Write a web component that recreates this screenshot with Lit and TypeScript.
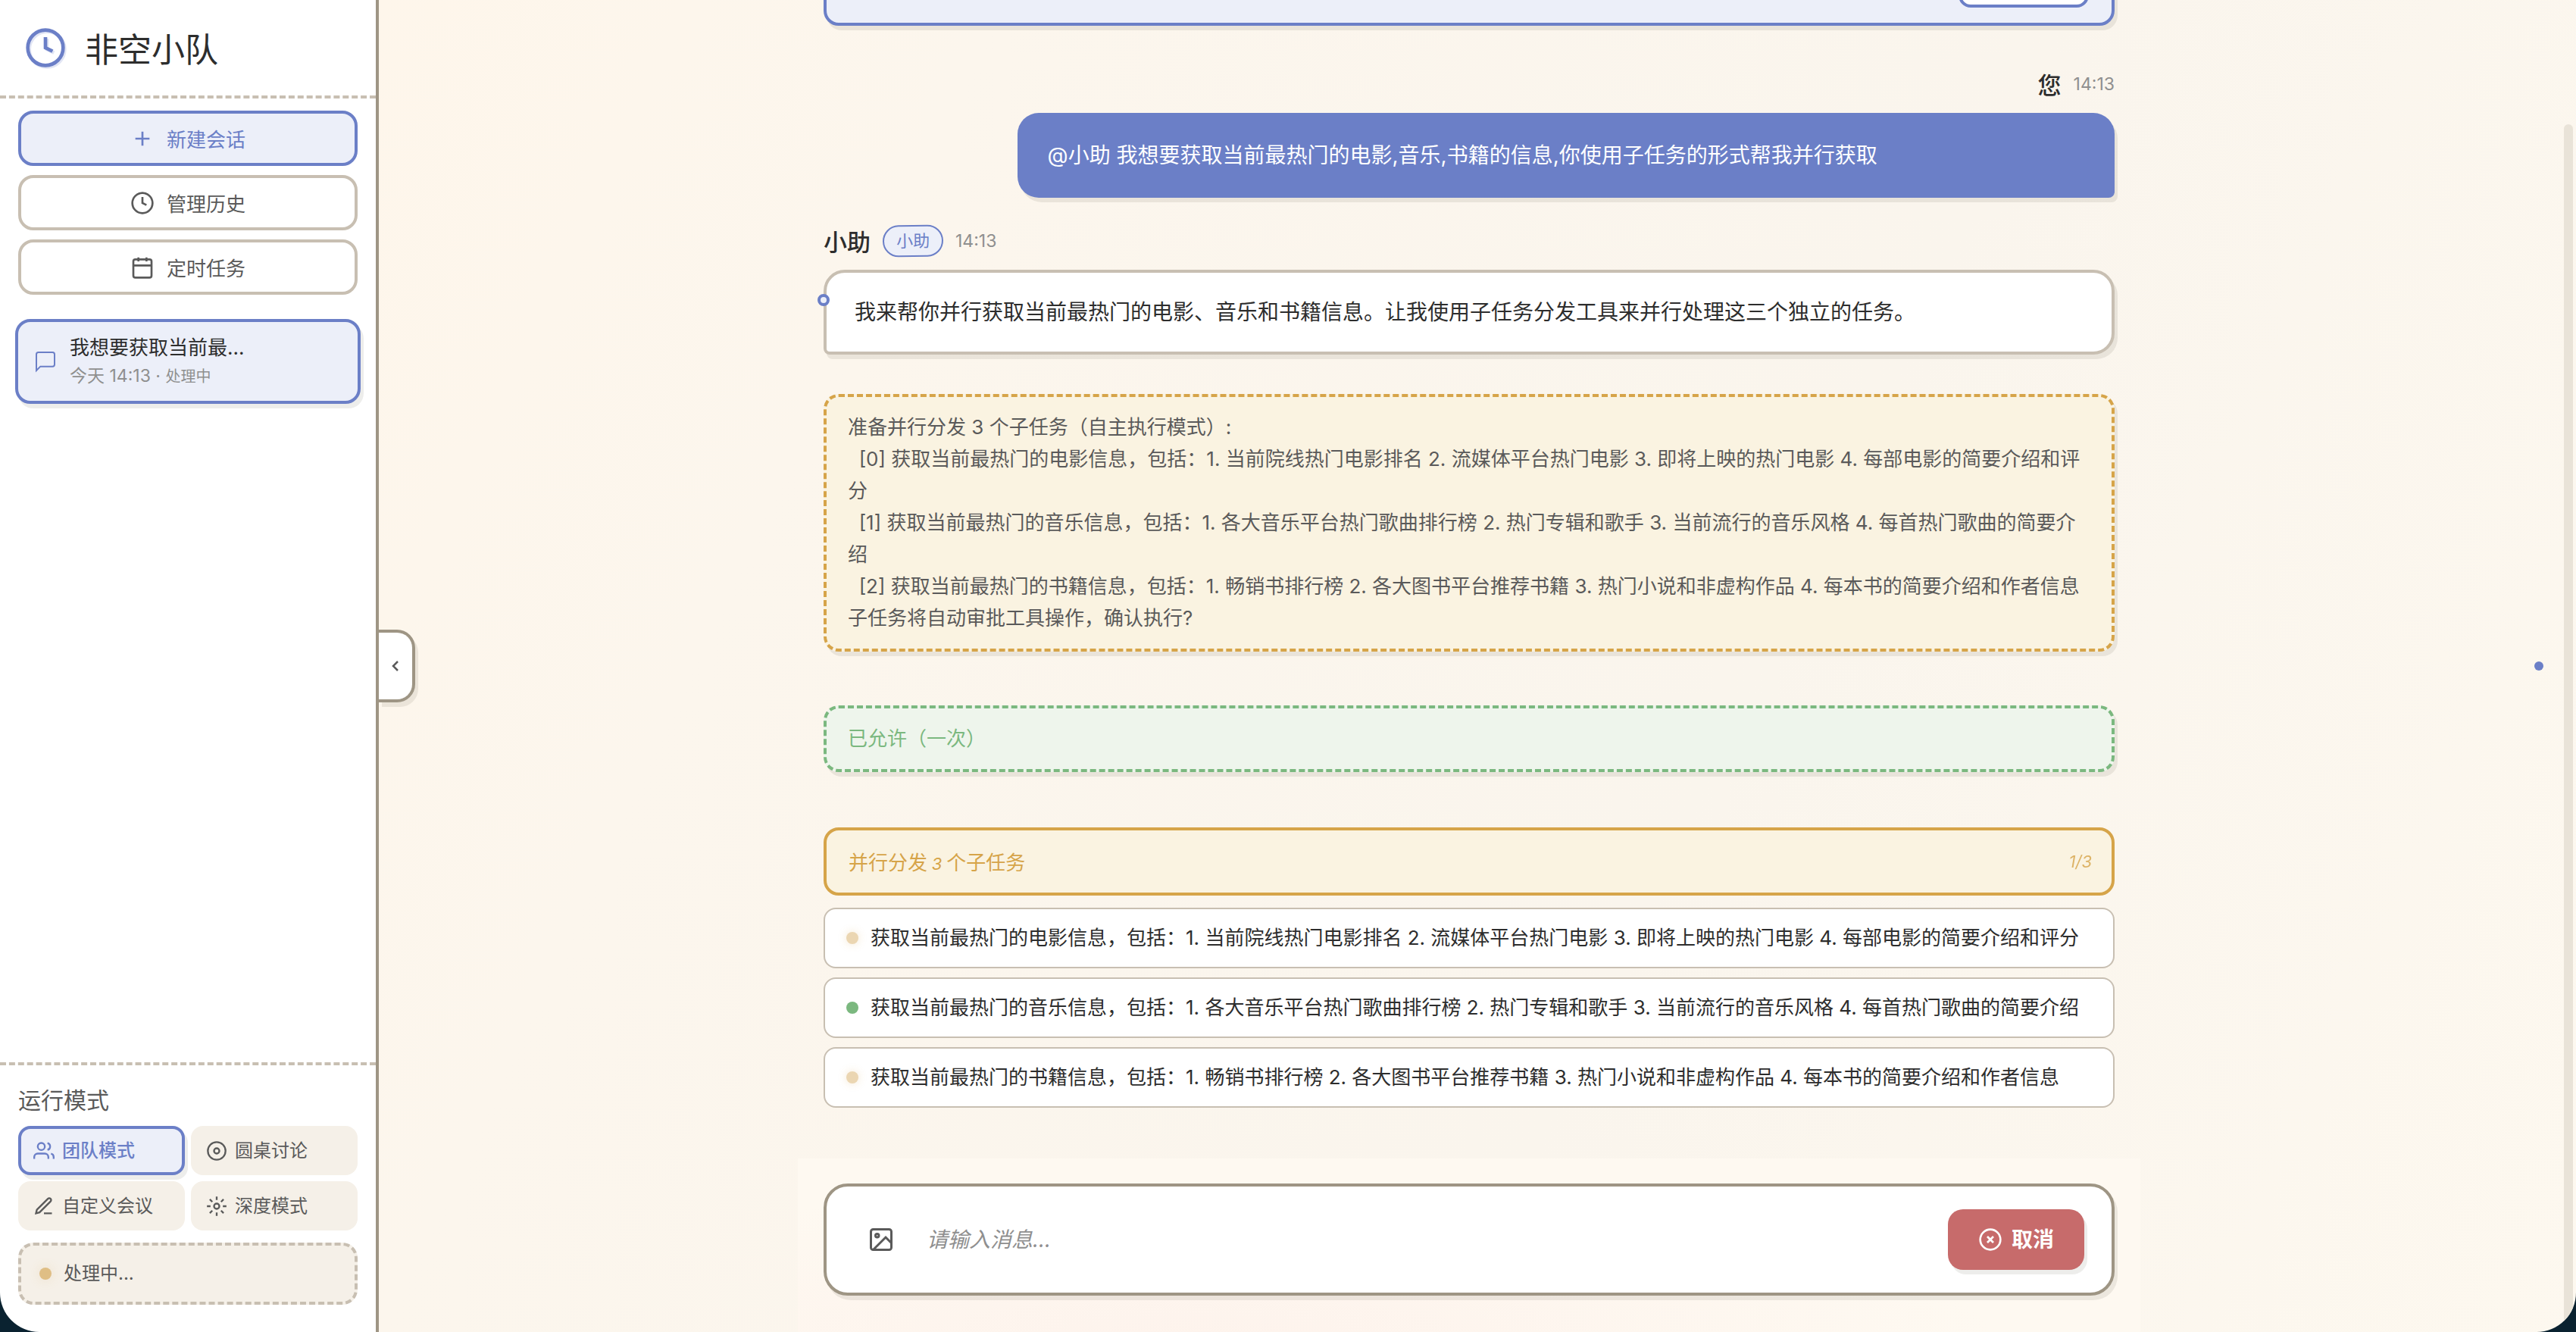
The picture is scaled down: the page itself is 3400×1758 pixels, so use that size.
import { LitElement, html, css, svg } from "lit";
import { customElement, property, state } from "lit/decorators.js";
import { classMap } from "lit/directives/class-map.js";

const ICONS = {
  clock: svg`<circle cx="12" cy="12" r="10"/><path d="M12 6v6l4 2"/>`,
  plus: svg`<path d="M12 5v14M5 12h14"/>`,
  calendar: svg`<rect x="3" y="4" width="18" height="18" rx="2"/><path d="M16 2v4M8 2v4M3 10h18"/>`,
  message: svg`<path d="M21 15a2 2 0 0 1-2 2H7l-4 4V5a2 2 0 0 1 2-2h14a2 2 0 0 1 2 2z"/>`,
  users: svg`<path d="M17 21v-2a4 4 0 0 0-4-4H5a4 4 0 0 0-4 4v2"/><circle cx="9" cy="7" r="4"/><path d="M23 21v-2a4 4 0 0 0-3-3.87M16 3.13a4 4 0 0 1 0 7.75"/>`,
  target: svg`<circle cx="12" cy="12" r="10"/><circle cx="12" cy="12" r="3"/>`,
  pen: svg`<path d="M12 20h9M16.5 3.5a2.121 2.121 0 0 1 3 3L7 19l-4 1 1-4L16.5 3.5z"/>`,
  spark: svg`<circle cx="12" cy="12" r="3"/><path d="M12 1v4M12 19v4M4.22 4.22l2.83 2.83M16.95 16.95l2.83 2.83M1 12h4M19 12h4M4.22 19.78l2.83-2.83M16.95 7.05l2.83-2.83"/>`,
  chevron: svg`<path d="M15 18l-6-6 6-6"/>`,
  image: svg`<rect x="3" y="3" width="18" height="18" rx="2"/><circle cx="8.5" cy="8.5" r="1.5"/><path d="M21 15l-5-5L5 21"/>`,
  cancel: svg`<circle cx="12" cy="12" r="10"/><path d="M15 9l-6 6M9 9l6 6"/>`,
};

type IconName = keyof typeof ICONS;

@customElement("line-icon")
export class LineIcon extends LitElement {
  static styles = css`
    :host {
      display: inline-flex;
      flex: none;
      width: 32px;
      height: 32px;
    }
    .glyph {
      width: 100%;
      height: 100%;
      fill: none;
      stroke: currentColor;
    }
  `;

  @property() name: IconName = "clock";
  @property({ type: Number }) weight = 2;

  render() {
    return html`<svg class="glyph" viewBox="0 0 24 24" stroke-width=${this.weight} aria-hidden="true">
      ${ICONS[this.name]}
    </svg>`;
  }
}

const palette = css`
  :host {
    --blue: #6b7fc7;
    --blue-soft: #eceff9;
    --amber: #d6a449;
    --amber-soft: #faf3e1;
    --green: #7bb87f;
    --green-soft: #eef5ec;
    --red: #c76b6b;
    --line: #c8bfb2;
    --line-strong: #9e9584;
    --sand: #f5f0e8;
    --ink: #2d2d2d;
    --ink-mid: #5a5a5a;
    --ink-soft: #8f8f8f;
    --lift: 4px 6px 0 rgba(60, 50, 30, 0.09);
    --sans: Inter, "Noto Sans CJK SC", sans-serif;
    --hand: "Kaiti SC", KaiTi, STKaiti, "Noto Sans CJK SC", sans-serif;
  }
  * {
    box-sizing: border-box;
  }
  button {
    margin: 0;
    font: inherit;
    color: inherit;
    cursor: pointer;
  }
`;

@customElement("side-panel")
export class SidePanel extends LitElement {
  static styles = [
    palette,
    css`
      :host {
        display: flex;
        flex-direction: column;
        width: 500px;
        flex: none;
        box-sizing: border-box;
        background: #fff;
        border-right: 4px solid var(--line-strong);
        font-family: var(--sans);
        color: var(--ink-mid);
      }
      .brand {
        display: flex;
        align-items: center;
        gap: 24px;
        padding: 35px 32px;
        border-bottom: 4px dashed var(--line);
      }
      .logo {
        width: 56px;
        height: 56px;
        color: var(--blue);
        filter: drop-shadow(2px 2px 0 rgba(107, 127, 199, 0.2));
      }
      .name {
        margin: 0;
        font: 400 44px/56px var(--hand);
        color: var(--ink);
      }
      .actions {
        display: flex;
        flex-direction: column;
        gap: 12px;
        padding: 16px 24px 32px;
      }
      .action {
        display: flex;
        align-items: center;
        justify-content: center;
        gap: 16px;
        padding: 16px;
        background: #fff;
        border: 4px solid var(--line);
        border-radius: 20px;
        font: 400 26px/33px var(--hand);
      }
      .action.primary {
        background: var(--blue-soft);
        border-color: var(--blue);
        color: var(--blue);
      }
      .sessions {
        display: flex;
        flex-direction: column;
        padding: 0 20px;
      }
      .session {
        display: flex;
        align-items: center;
        gap: 16px;
        padding: 15px 20px;
        text-align: left;
        background: var(--blue-soft);
        border: 4px solid var(--blue);
        border-radius: 20px;
        box-shadow: var(--lift);
      }
      .session-icon {
        color: var(--blue);
      }
      .session-text {
        display: flex;
        flex-direction: column;
      }
      .session-title {
        font-size: 26px;
        line-height: 38px;
        color: var(--ink);
      }
      .session-meta {
        font-size: 23px;
        line-height: 36px;
        color: var(--ink-soft);
      }
      .session-state {
        font-size: 20px;
        line-height: 20px;
      }
      .modes {
        margin-top: auto;
        padding: 24px 24px 36px;
        border-top: 4px dashed var(--line);
      }
      .modes-title {
        margin: 0 0 16px;
        font: 400 30px/40px var(--hand);
      }
      .mode-grid {
        display: grid;
        grid-template-columns: 1fr 1fr;
        gap: 8px;
      }
      .mode {
        display: flex;
        align-items: center;
        gap: 10px;
        padding: 12px 16px;
        background: var(--sand);
        border: 4px solid transparent;
        border-radius: 16px;
        font-size: 24px;
        line-height: 33px;
      }
      .mode.on {
        background: var(--blue-soft);
        border-color: var(--blue);
        box-shadow: var(--lift);
        color: var(--blue);
        font-weight: 500;
      }
      .mode-icon {
        width: 28px;
        height: 28px;
      }
      .status {
        display: flex;
        align-items: center;
        gap: 16px;
        margin-top: 16px;
        padding: 20px 24px;
        background: var(--sand);
        border: 4px dashed var(--line);
        border-radius: 20px;
        font-size: 24px;
        line-height: 34px;
      }
      .pulse {
        width: 16px;
        height: 16px;
        border-radius: 50%;
        background: #dfbe85;
        box-shadow: 0 0 16px rgba(214, 164, 73, 0.2);
      }
    `,
  ];

  @state() private mode = "团队模式";

  private readonly actions: { icon: IconName; label: string; primary?: boolean }[] = [
    { icon: "plus", label: "新建会话", primary: true },
    { icon: "clock", label: "管理历史" },
    { icon: "calendar", label: "定时任务" },
  ];

  private readonly modes: { icon: IconName; label: string }[] = [
    { icon: "users", label: "团队模式" },
    { icon: "target", label: "圆桌讨论" },
    { icon: "pen", label: "自定义会议" },
    { icon: "spark", label: "深度模式" },
  ];

  render() {
    return html`
      <header class="brand">
        <line-icon class="logo" name="clock"></line-icon>
        <h1 class="name">非空小队</h1>
      </header>
      <nav class="actions">
        ${this.actions.map(
          (a) => html`<button class=${classMap({ action: true, primary: !!a.primary })}>
            <line-icon name=${a.icon}></line-icon>${a.label}
          </button>`,
        )}
      </nav>
      <div class="sessions">
        <button class="session">
          <line-icon class="session-icon" name="message" weight="1.5"></line-icon>
          <span class="session-text">
            <span class="session-title">我想要获取当前最...</span>
            <span class="session-meta">今天 14:13 · <span class="session-state">处理中</span></span>
          </span>
        </button>
      </div>
      <section class="modes">
        <h2 class="modes-title">运行模式</h2>
        <div class="mode-grid">
          ${this.modes.map(
            (m) => html`<button
              class=${classMap({ mode: true, on: m.label === this.mode })}
              aria-pressed=${m.label === this.mode ? "true" : "false"}
              @click=${() => (this.mode = m.label)}
            >
              <line-icon class="mode-icon" name=${m.icon}></line-icon>${m.label}
            </button>`,
          )}
        </div>
        <div class="status" role="status"><span class="pulse"></span>处理中...</div>
      </section>
    `;
  }
}

const MOVIE = "获取当前最热门的电影信息，包括：1. 当前院线热门电影排名 2. 流媒体平台热门电影 3. 即将上映的热门电影 4. 每部电影的简要介绍和评分";
const MUSIC = "获取当前最热门的音乐信息，包括：1. 各大音乐平台热门歌曲排行榜 2. 热门专辑和歌手 3. 当前流行的音乐风格 4. 每首热门歌曲的简要介绍";
const BOOK = "获取当前最热门的书籍信息，包括：1. 畅销书排行榜 2. 各大图书平台推荐书籍 3. 热门小说和非虚构作品 4. 每本书的简要介绍和作者信息";

const PLAN = [
  "准备并行分发 3 个子任务（自主执行模式）:",
  `  [0] ${MOVIE}`,
  `  [1] ${MUSIC}`,
  `  [2] ${BOOK}`,
  "子任务将自动审批工具操作，确认执行?",
].join("\n");

@customElement("chat-view")
export class ChatView extends LitElement {
  static styles = [
    palette,
    css`
      :host {
        display: flex;
        flex: 1;
        flex-direction: column;
        align-items: center;
        min-width: 0;
        min-height: 0;
        font-family: var(--sans);
        color: var(--ink);
      }
      .messages {
        display: flex;
        flex: 1;
        flex-direction: column;
        justify-content: flex-end;
        min-height: 0;
        width: 100%;
        max-width: 1772px;
        padding: 0 34px 67px;
        overflow: hidden;
      }
      .prompt-card {
        display: flex;
        flex: none;
        justify-content: flex-end;
        margin-bottom: 55px;
        padding: 20px 30px;
        background: var(--blue-soft);
        border: 4px solid var(--blue);
        border-radius: 20px;
        box-shadow: var(--lift);
      }
      .prompt-action {
        width: 172px;
        height: 64px;
        background: #fff;
        border: 4px solid var(--blue);
        border-radius: 16px;
      }
      .message {
        display: flex;
        flex: none;
        flex-direction: column;
        align-items: flex-start;
      }
      .message.own {
        align-items: flex-end;
        margin-bottom: 35px;
      }
      .meta {
        display: flex;
        align-items: center;
        gap: 16px;
        height: 44px;
        margin-bottom: 16px;
      }
      .author {
        font: 500 31px/44px var(--hand);
      }
      .badge {
        padding: 0 16px;
        background: var(--blue-soft);
        border: 2px solid var(--blue);
        border-radius: 21px;
        color: var(--blue);
        font-size: 22px;
        line-height: 38px;
        transform: rotate(-1deg);
      }
      .time {
        font-size: 23px;
        line-height: 44px;
        color: var(--ink-soft);
      }
      .bubble {
        position: relative;
        width: 100%;
        padding: 28px 37px;
        background: #fff;
        border: 4px solid var(--line);
        border-radius: 28px 28px 28px 8px;
        box-shadow: var(--lift);
        font-size: 28px;
        line-height: 48px;
      }
      .bubble::before {
        content: "";
        position: absolute;
        left: -12px;
        top: 28px;
        width: 16px;
        height: 16px;
        background: var(--blue-soft);
        border: 4px solid var(--blue);
        border-radius: 50%;
        box-sizing: border-box;
      }
      .own .bubble {
        width: 85%;
        padding: 32px 40px;
        background: var(--blue);
        border: 0;
        border-radius: 28px 28px 8px 28px;
        color: #fff;
      }
      .own .bubble::before {
        content: none;
      }
      .notice {
        flex: none;
        padding: 19px 28px;
        border: 4px dashed var(--amber);
        border-radius: 20px;
        background: var(--amber-soft);
        box-shadow: var(--lift);
        color: var(--ink-mid);
        font-size: 26px;
        line-height: 42px;
        white-space: pre-wrap;
      }
      .plan {
        margin: 52px 0 71px;
      }
      .allowed {
        margin-bottom: 73px;
        border-color: var(--green);
        background: var(--green-soft);
        color: var(--green);
      }
      .batch {
        display: flex;
        flex: none;
        justify-content: space-between;
        align-items: center;
        padding: 20px 26px 20px 29px;
        background: var(--amber-soft);
        border: 4px solid var(--amber);
        border-radius: 20px;
        color: var(--amber);
        font: 400 26px/42px var(--hand);
      }
      .digits {
        font-family: Inter, sans-serif;
        font-style: italic;
        font-size: 22px;
        line-height: 22px;
      }
      .progress {
        opacity: 0.8;
      }
      .tasks {
        display: flex;
        flex: none;
        flex-direction: column;
        gap: 12px;
        margin: 16px 0 0;
        padding: 0;
        list-style: none;
      }
      .task {
        display: flex;
        align-items: center;
        gap: 16px;
        padding: 18px 28px;
        background: #fff;
        border: 2px solid var(--line);
        border-radius: 16px;
        font-size: 26px;
        line-height: 40px;
      }
      .task-dot {
        flex: none;
        width: 16px;
        height: 16px;
        border-radius: 50%;
        background: #ebd6b2;
        box-shadow: 0 0 12px rgba(214, 164, 73, 0.25);
      }
      .task-dot.done {
        background: var(--green);
        box-shadow: none;
      }
      .task-text {
        min-width: 0;
        overflow: hidden;
        text-overflow: ellipsis;
        white-space: nowrap;
      }
      .composer {
        flex: none;
        width: 100%;
        max-width: 1772px;
        padding: 33px 34px 48px;
        background: radial-gradient(ellipse at 30% 110%, rgba(253, 240, 234, 0.7), transparent 60%), #fef9f1;
      }
      .box {
        display: flex;
        align-items: center;
        padding: 30px 36px;
        background: #fff;
        border: 4px solid var(--line-strong);
        border-radius: 32px;
        box-shadow: var(--lift);
      }
      .attach {
        display: flex;
        align-items: center;
        justify-content: center;
        width: 72px;
        height: 72px;
        padding: 0;
        background: none;
        border: 0;
        color: var(--ink-mid);
      }
      .attach-icon {
        width: 36px;
        height: 36px;
      }
      .entry {
        flex: 1;
        height: 48px;
        margin: 0 16px;
        padding: 0 8px;
        border: 0;
        outline: 0;
        resize: none;
        background: none;
        color: var(--ink);
        font: 400 28px/48px var(--sans);
      }
      .entry::placeholder {
        color: var(--ink-soft);
        font-style: italic;
      }
      .cancel {
        display: flex;
        align-items: center;
        gap: 12px;
        padding: 20px 40px;
        background: var(--red);
        border: 0;
        border-radius: 20px;
        box-shadow: var(--lift);
        color: #fff;
        font-size: 28px;
        font-weight: 600;
        line-height: 40px;
      }
    `,
  ];

  private readonly tasks = [
    { text: MOVIE, done: false },
    { text: MUSIC, done: true },
    { text: BOOK, done: false },
  ];

  render() {
    return html`
      <div class="messages">
        <div class="prompt-card">
          <button class="prompt-action" aria-label="操作"></button>
        </div>
        <article class="message own">
          <div class="meta"><span class="author">您</span><span class="time">14:13</span></div>
          <div class="bubble">@小助 我想要获取当前最热门的电影,音乐,书籍的信息,你使用子任务的形式帮我并行获取</div>
        </article>
        <article class="message">
          <div class="meta">
            <span class="author">小助</span><span class="badge">小助</span><span class="time">14:13</span>
          </div>
          <div class="bubble">我来帮你并行获取当前最热门的电影、音乐和书籍信息。让我使用子任务分发工具来并行处理这三个独立的任务。</div>
        </article>
        <div class="notice plan">${PLAN}</div>
        <div class="notice allowed">已允许（一次）</div>
        <div class="batch">
          <span>并行分发 <span class="digits">3</span> 个子任务</span>
          <span class="digits progress">1/3</span>
        </div>
        <ul class="tasks">
          ${this.tasks.map(
            (t) => html`<li class="task">
              <span class=${classMap({ "task-dot": true, done: t.done })}></span>
              <span class="task-text">${t.text}</span>
            </li>`,
          )}
        </ul>
      </div>
      <form class="composer" @submit=${(e: Event) => e.preventDefault()}>
        <div class="box">
          <button type="button" class="attach" aria-label="添加图片">
            <line-icon class="attach-icon" name="image"></line-icon>
          </button>
          <textarea class="entry" rows="1" aria-label="消息" placeholder="请输入消息..."></textarea>
          <button type="button" class="cancel"><line-icon name="cancel"></line-icon>取消</button>
        </div>
      </form>
    `;
  }
}

@customElement("app-root")
export class AppRoot extends LitElement {
  static styles = [
    palette,
    css`
      :host {
        display: block;
        height: 100vh;
        background: #0a2230;
      }
      .window {
        display: flex;
        height: 100%;
        overflow: hidden;
        border-radius: 0 0 52px 52px;
      }
      .main {
        position: relative;
        display: flex;
        flex: 1;
        min-width: 0;
        background: linear-gradient(115deg, #fef6eb 0%, #fcf6ed 22%, #faf5ed 60%, #fdf8ef 100%);
      }
      .rail {
        flex: none;
        width: 12px;
        margin: 164px 4px 0 6px;
        border-radius: 6px 6px 0 0;
        background: #e9e3d8;
      }
      .fold {
        position: absolute;
        left: 0;
        top: 50%;
        display: flex;
        align-items: center;
        justify-content: center;
        width: 48px;
        height: 96px;
        padding: 0;
        transform: translateY(-50%);
        background: #fff;
        border: 4px solid var(--line-strong);
        border-left: 0;
        border-radius: 0 24px 24px 0;
        box-shadow: var(--lift);
        color: var(--ink-mid);
      }
      .fold-icon {
        width: 24px;
        height: 24px;
      }
      .marker {
        position: absolute;
        right: 43px;
        top: 50%;
        width: 12px;
        height: 12px;
        border-radius: 50%;
        background: var(--blue);
        transform: translateY(-50%);
      }
    `,
  ];

  render() {
    return html`
      <div class="window">
        <side-panel></side-panel>
        <main class="main">
          <chat-view></chat-view>
          <div class="rail"></div>
          <button class="fold" aria-label="收起侧栏">
            <line-icon class="fold-icon" name="chevron" weight="2.5"></line-icon>
          </button>
          <span class="marker"></span>
        </main>
      </div>
    `;
  }
}
